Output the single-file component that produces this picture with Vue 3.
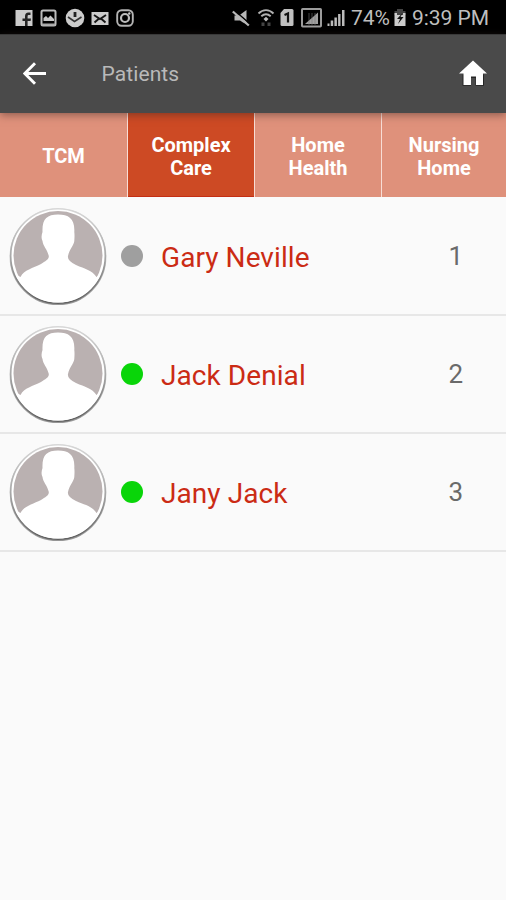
<script setup>
import { ref } from 'vue'

const tabs = [['TCM'], ['Complex', 'Care'], ['Home', 'Health'], ['Nursing', 'Home']]
const activeTab = ref(1)
const patients = [
  { name: 'Gary Neville', number: 1, online: false },
  { name: 'Jack Denial', number: 2, online: true },
  { name: 'Jany Jack', number: 3, online: true },
]
</script>

<template>
  <div class="screen">
    <header class="status">
      <div class="notices">
        <svg viewBox="0 0 20 20"><path fill="#ccc" d="M1.500 2h17v16h-17z" /><path d="M11 18v-5H8.500v-2.500H11V8.500C11 6 12.200 4.500 14.500 4.500h2V7H15c-1 0-1.400.4-1.400 1.300v2.200H17l-.4 2.500h-3v5z" fill="#252525" /></svg>
        <svg viewBox="0 0 20 20"><rect x="2.500" y="2.500" width="14" height="15" rx="1.500" fill="none" stroke="#bbb" stroke-width="2" /><path fill="#c8c8c8" d="M4.500 13V10l2.500-2 2 2 2.500-2.500 3.500 3.500v2z" /><path fill="#aaa" d="M3 15.500h13v2H3z" /></svg>
        <svg viewBox="0 0 20 20"><circle cx="10" cy="10" r="9.300" fill="#ccc" /><path d="M10 4v5" fill="none" stroke="#222" stroke-width="2.800" /><path d="m3 9 6.500 4.500L16.500 9" fill="none" stroke="#333" stroke-width="1.600" /></svg>
        <svg viewBox="0 0 20 20"><path fill="#ccc" d="M1.500 4h17v13h-17z" /><path d="m4 7 6 4 6-4M4.500 14.500 8.500 11M15.500 14.500 11.500 11" fill="none" stroke="#151515" stroke-width="1.900" /></svg>
        <svg viewBox="0 0 20 20"><rect x="2.200" y="2.200" width="15.600" height="15.600" rx="4.500" fill="none" stroke="#b4b4b4" stroke-width="1.900" /><circle cx="10" cy="10" r="4" fill="none" stroke="#bbb" stroke-width="2.200" /><circle cx="14.300" cy="5.500" r="1.200" fill="#ccc" /></svg>
      </div>
      <svg class="mute" viewBox="0 0 18 20"><path fill="#b8b8b8" d="M2.500 7.500H7L14.500 2v14L11 14.500l-3-2H2.500z" /><path d="m2 2 16 14" stroke="#000" stroke-width="1.500" /><path d="m.8 3.500 16 14" stroke="#b8b8b8" stroke-width="2.300" /></svg>
      <svg class="wifi" viewBox="0 0 18 20"><path d="M1.500 5.500c4.500-4.500 10.500-4.500 15 0M4.300 8.300c3-2.700 6.400-2.700 9.400 0" fill="none" stroke="#b0b0b0" stroke-width="1.900" /><path fill="#bbb" d="M9 8.800 11.500 11 9 13.500 6.500 11z" /><path fill="#444" d="M4.500 14.500h3v3.500h-3zM10.500 14.500h3v3.500h-3z" /></svg>
      <svg class="sim" viewBox="0 0 14 20"><path fill="#c0c0c0" d="M4 1h8q1.500 0 1.500 1.500v14Q13.500 18 12 18H2Q.5 18 .5 16.500V5z" /><path d="M4.500 7 8 5.500v9" fill="none" stroke="#111" stroke-width="2.200" /></svg>
      <svg class="network" viewBox="0 0 21 20"><rect x="1" y="1" width="19" height="17.500" rx=".7" fill="none" stroke="#9c9c9c" stroke-width="2" /><path fill="#a0a0a0" d="M4 16 17 4.500V16z" /><path d="M8 5v12M11 5v12M14 5v12" stroke="#777" stroke-width=".6" /></svg>
      <svg class="signal" viewBox="0 0 18 20"><path fill="#bbb" d="M.5 15.500h2V18h-2zM3.700 12.500h2.500V18H3.700zM7.400 9.500h2.500V18H7.400zM11.100 6h2.400v12h-2.400zM15 2h2.500v16H15z" /></svg>
      <span class="percent">74%</span>
      <svg class="battery" viewBox="0 0 12 20"><path fill="#444" d="M3 1h6v2h2.500v4H.5V3H3z" /><path fill="#ccc" d="M.5 5h2.500v2h6V5h2.500v13H.5z" /><path fill="#111" d="M8.500 5 3 11h3l-2 5 5.500-7H6.500z" /></svg>
      <time>9:39 PM</time>
    </header>

    <nav class="toolbar">
      <svg class="back" viewBox="0 0 24 24"><path d="M23 11.500H2M12 1.200 1.800 11.500 12 21.800" fill="none" stroke="#fff" stroke-width="2.900" /></svg>
      <h1>Patients</h1>
      <svg class="home" viewBox="0 0 30 28"><path d="M4.500 14.500v11.300h8.500V18h4.500v7.800h8.500V14.500" fill="#252525" /><path fill="#fff" d="M15 .5 29 13.500h-4V25h-7v-8.500h-5V25H5.500V13.500H1z" /></svg>
    </nav>

    <div class="tabs">
      <button v-for="(tab, i) in tabs" :key="i" :class="{ active: activeTab === i }" @click="activeTab = i">
        <span v-for="line in tab" :key="line">{{ line }}</span>
      </button>
    </div>

    <ul>
      <li v-for="patient in patients" :key="patient.number">
        <svg class="avatar" viewBox="0 0 100 100">
          <defs>
            <linearGradient id="rim" x2="0" y2="1"><stop stop-color="#d8d8d8" /><stop offset=".5" stop-color="#a8a8a8" /><stop offset="1" stop-color="#606060" /></linearGradient>
            <clipPath id="photo"><circle cx="50" cy="50" r="46.500" /></clipPath>
          </defs>
          <circle cx="50" cy="50.700" r="47.500" fill="none" stroke="url(#rim)" stroke-width="1.800" opacity=".65" />
          <circle cx="50" cy="50" r="47.300" fill="#fff" stroke="url(#rim)" stroke-width="1.600" />
          <circle cx="50" cy="49.500" r="44.500" fill="#bab1b1" />
          <path clip-path="url(#photo)" fill="#fff" d="M34.500 26C34 13 39 8.600 50 8.600S67 13 66.300 26c.4 3 .2 6 0 9-.3 4-4.800 8-6.300 15-.7 3 2 6 8 9 9 4 16 5 20.500 12L97 66v34H3V66l9.500 5C16 64 25 62 33 58c5-3 9-5 7.500-9-1.500-6-5.500-9-6-14-1.500-3-1-6 0-9z" />
        </svg>
        <i class="dot" :class="{ online: patient.online }"></i>
        <span class="name">{{ patient.name }}</span>
        <span class="number">{{ patient.number }}</span>
      </li>
    </ul>
  </div>
</template>

<style>
body { margin: 0; background: #fafafa; }
</style>

<style scoped>
.screen { width: 506px; height: 900px; overflow: hidden; background: #fafafa; font-family: Roboto, sans-serif; }
svg { display: block; flex: none; }
.status { display: flex; align-items: center; height: 34px; box-sizing: border-box; padding: 1px 0 0 14px; background: #000; color: #bebebe; font-size: 21px; line-height: 32px; white-space: nowrap; }
.notices { display: flex; gap: 5.300px; width: 218px; }
.notices svg { width: 20px; height: 20px; }
.mute { width: 18px; height: 20px; margin-right: 7px; }
.wifi { width: 18px; height: 20px; margin-right: 5px; }
.sim { width: 14px; height: 20px; margin-right: 7px; }
.network { width: 21px; height: 20px; margin-right: 5px; }
.signal { width: 18px; height: 20px; margin-right: 6px; }
.percent { width: 43px; }
.battery { width: 12px; height: 20px; margin-right: 6px; }
time { letter-spacing: -.05px; }
.toolbar { position: relative; display: flex; align-items: center; height: 79px; box-sizing: border-box; padding: 0 18px 0 23px; background: #4a4a4a; border-top: 1px solid #393939; box-shadow: 0 2px 8px rgba(60, 40, 35, .5); }
.back { width: 24px; height: 24px; }
h1 { margin: 0 auto 0 54.500px; color: #b9b9b9; font-size: 21px; font-weight: 400; letter-spacing: .1px; line-height: 28px; }
.home { width: 30px; height: 28px; }
.tabs { display: grid; grid-template-columns: 128px 127px 127px 124px; height: 84px; }
button { display: flex; flex-direction: column; align-items: center; justify-content: center; padding: 3px 0 0; border: 0; border-right: 1px solid #f8ddd5; background: #df917b; color: #fff; font: 700 20px/23px Roboto, sans-serif; }
button:last-child { border-right: 0; }
.active { background: #cd4a24; box-shadow: inset 0 -1px #c42e14; }
ul { margin: 0; padding: 1px 0 0; list-style: none; }
li { display: flex; align-items: center; height: 118px; box-sizing: border-box; padding: 0 43px 0 8px; border-bottom: 2px solid #e7e7e7; }
.avatar { width: 100px; height: 100px; }
.dot { width: 22px; height: 22px; margin: 0 18px 0 13px; border-radius: 50%; background: #9f9f9f; }
.dot.online { background: #09d509; }
.name { padding-top: 3px; color: #cb2b14; font-size: 28px; letter-spacing: .07px; line-height: 34px; }
.number { margin-left: auto; color: #6a6a6a; font-size: 26px; line-height: 32px; }
</style>
